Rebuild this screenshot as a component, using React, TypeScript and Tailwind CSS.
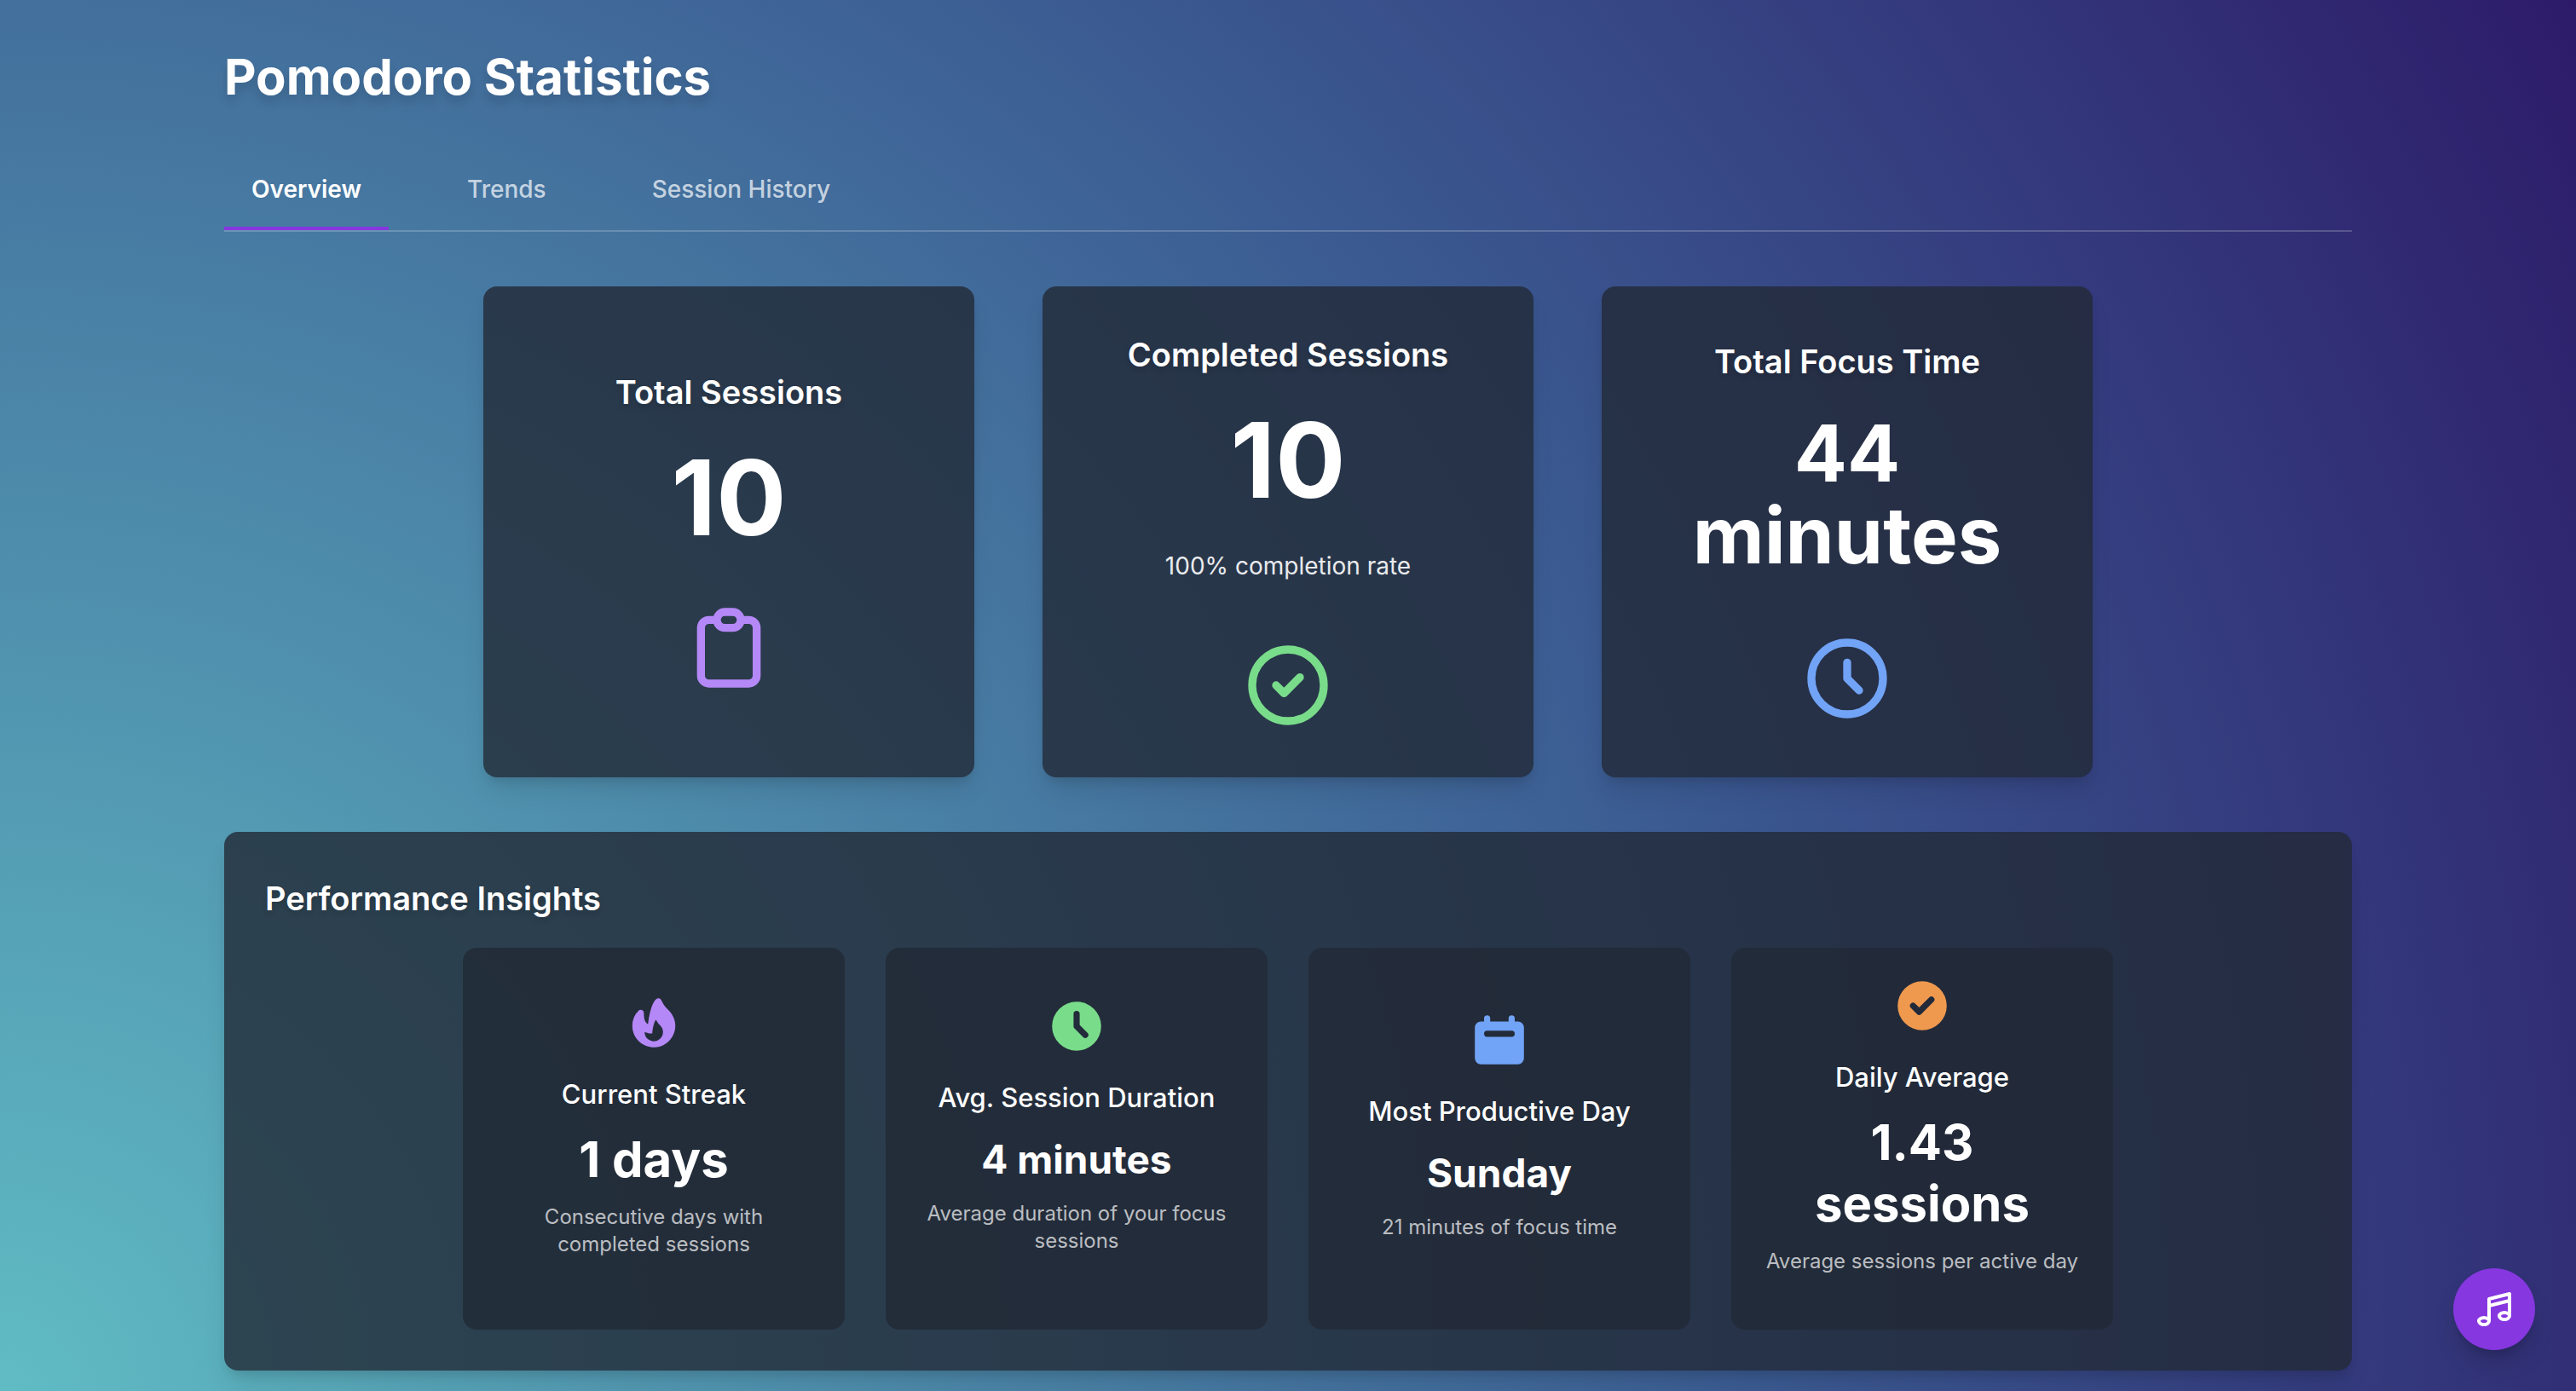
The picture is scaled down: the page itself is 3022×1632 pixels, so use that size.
import type { ReactNode } from "react";
import {
  HiOutlineClipboard,
  HiOutlineCheckCircle,
  HiOutlineClock,
} from "react-icons/hi";

const tabs = ["Overview", "Trends", "Session History"];

function StatCard({ title, children, icon }: { title: string; children: ReactNode; icon: ReactNode }) {
  return (
    <article className="flex size-[576px] flex-col items-center justify-center rounded-2xl bg-[#222936]/80 p-12 text-center shadow-[0_20px_30px_-6px_rgba(0,0,0,0.1),0_8px_12px_-4px_rgba(0,0,0,0.1)]">
      <h2 className="mb-8 text-[38px] leading-14 font-semibold text-shadow-[0_4px_6px_rgba(0,0,0,0.15)]">{title}</h2>
      {children}
      {icon}
    </article>
  );
}

function InsightCard({
  icon,
  title,
  value,
  note,
  large = false,
}: {
  icon: ReactNode;
  title: string;
  value: string;
  note: string;
  large?: boolean;
}) {
  return (
    <article className="flex size-[448px] flex-col items-center justify-center rounded-2xl bg-[#222936]/80 px-9 py-6 text-center">
      {icon}
      <h3 className="mt-6 mb-4 text-[31px] leading-12 font-medium">{title}</h3>
      <p className={large ? "mb-4 text-[58px] leading-[72px] font-bold" : "mb-4 text-[46px] leading-16 font-bold"}>{value}</p>
      <p className="mb-8 text-[24px] leading-8 text-white/70">{note}</p>
    </article>
  );
}

export default function App() {
  return (
    <div className="min-h-screen bg-[radial-gradient(circle_at_bottom_left,#60bcc4_0%,#3b5b92_60%,#2d1b69_100%)] px-8 pt-12 pb-6 font-[Inter,sans-serif] text-white">
      <main className="mx-auto max-w-[2496px]">
        <h1 className="text-[58px] leading-[84px] font-bold text-shadow-[0_8px_12px_rgba(0,0,0,0.15)]">Pomodoro Statistics</h1>
        <nav className="mt-12.5 flex gap-15 border-b-2 border-white/20" aria-label="Statistics views">
          {tabs.map((tab, i) => (
            <button
              key={tab}
              type="button"
              className={
                i === 0
                  ? "border-b-4 border-[#8637df] px-8 pt-5 pb-6 text-[28px] leading-10 font-semibold"
                  : "border-b-4 border-transparent px-8 pt-5 pb-6 text-[28px] leading-10 font-medium text-white/70"
              }
            >
              {tab}
            </button>
          ))}
        </nav>

        <section className="mt-16 flex flex-wrap justify-center gap-20" aria-label="Totals">
          <StatCard title="Total Sessions" icon={<HiOutlineClipboard className="size-28 text-[#b588f7]" />}>
            <p className="mb-14 text-[122px] leading-32 font-bold">10</p>
          </StatCard>
          <StatCard title="Completed Sessions" icon={<HiOutlineCheckCircle className="size-28 text-[#79dc8a]" />}>
            <p className="mb-10 text-[122px] leading-32 font-bold">10</p>
            <p className="mb-16 text-[28px] leading-10 text-white/90">100% completion rate</p>
          </StatCard>
          <StatCard title="Total Focus Time" icon={<HiOutlineClock className="size-28 text-[#71a3f6]" />}>
            <p className="mb-16 text-[92px] leading-24 font-bold">44 minutes</p>
          </StatCard>
        </section>

        <section className="mt-16 rounded-2xl bg-[#222936]/80 p-12 shadow-[0_20px_30px_-6px_rgba(0,0,0,0.1),0_8px_12px_-4px_rgba(0,0,0,0.1)]">
          <h2 className="mb-7 text-[38px] leading-15 font-semibold text-shadow-[0_4px_6px_rgba(0,0,0,0.15)]">Performance Insights</h2>
          <div className="flex flex-wrap justify-center gap-12">
            <InsightCard
              large
              icon={
                <svg viewBox="0 0 20 20" fill="currentColor" className="size-[72px] text-[#b588f7]" aria-hidden="true">
                  <path fillRule="evenodd" clipRule="evenodd" d="M12.395 2.553a1 1 0 00-1.45-.385c-.345.23-.614.558-.822.88-.214.33-.403.713-.57 1.116-.334.804-.614 1.768-.84 2.734a31.365 31.365 0 00-.613 3.58 2.64 2.64 0 01-.945-1.067c-.328-.68-.398-1.534-.398-2.654A1 1 0 005.05 6.05 6.981 6.981 0 003 11a7 7 0 1011.95-4.95c-.592-.591-.98-.985-1.348-1.467-.363-.476-.724-1.063-1.207-2.03zM12.12 15.12A3 3 0 017 13s.879.5 2.5.5c0-1 .5-4 1.25-4.5.5 1 .786 1.293 1.371 1.879A2.99 2.99 0 0113 13a2.99 2.99 0 01-.879 2.121z" />
                </svg>
              }
              title="Current Streak"
              value="1 days"
              note="Consecutive days with completed sessions"
            />
            <InsightCard
              icon={
                <svg viewBox="0 0 20 20" fill="currentColor" className="size-[72px] text-[#79dc8a]" aria-hidden="true">
                  <path fillRule="evenodd" clipRule="evenodd" d="M10 18a8 8 0 100-16 8 8 0 000 16zm1-12a1 1 0 10-2 0v4a1 1 0 00.293.707l2.828 2.829a1 1 0 101.415-1.415L11 9.586V6z" />
                </svg>
              }
              title="Avg. Session Duration"
              value="4 minutes"
              note="Average duration of your focus sessions"
            />
            <InsightCard
              icon={
                <svg viewBox="0 0 20 20" fill="currentColor" className="size-[72px] text-[#71a3f6]" aria-hidden="true">
                  <path fillRule="evenodd" clipRule="evenodd" d="M6 2a1 1 0 00-1 1v1H4a2 2 0 00-2 2v10a2 2 0 002 2h12a2 2 0 002-2V6a2 2 0 00-2-2h-1V3a1 1 0 10-2 0v1H7V3a1 1 0 00-1-1zm0 5a1 1 0 000 2h8a1 1 0 100-2H6z" />
                </svg>
              }
              title="Most Productive Day"
              value="Sunday"
              note="21 minutes of focus time"
            />
            <InsightCard
              large
              icon={
                <svg viewBox="0 0 20 20" fill="currentColor" className="size-[72px] text-[#ef994f]" aria-hidden="true">
                  <path fillRule="evenodd" clipRule="evenodd" d="M10 18a8 8 0 100-16 8 8 0 000 16zm3.707-9.293a1 1 0 00-1.414-1.414L9 10.586 7.707 9.293a1 1 0 00-1.414 1.414l2 2a1 1 0 001.414 0l4-4z" />
                </svg>
              }
              title="Daily Average"
              value="1.43 sessions"
              note="Average sessions per active day"
            />
          </div>
        </section>
      </main>

      <button
        type="button"
        aria-label="Music"
        className="fixed right-12 bottom-12 flex size-24 items-center justify-center rounded-full bg-[#8637df] shadow-[0_20px_30px_-6px_rgba(0,0,0,0.15),0_8px_12px_-4px_rgba(0,0,0,0.15)]"
      >
        <svg viewBox="0 0 24 24" fill="none" stroke="currentColor" strokeWidth="2" strokeLinecap="round" strokeLinejoin="round" className="size-12" aria-hidden="true">
          <path d="M9 19V6l12-3v13M9 19c0 1.105-1.343 2-3 2s-3-.895-3-2 1.343-2 3-2 3 .895 3 2zm12-3c0 1.105-1.343 2-3 2s-3-.895-3-2 1.343-2 3-2 3 .895 3 2zM9 10l12-3" />
        </svg>
      </button>
    </div>
  );
}
